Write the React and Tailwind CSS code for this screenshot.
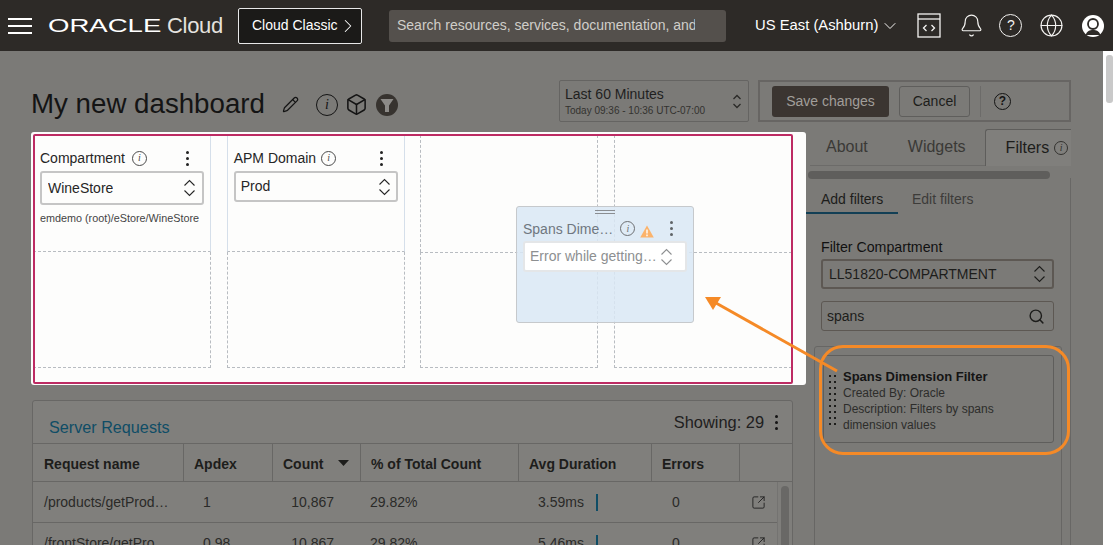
import { Bell, Box, Globe, Pencil, Search, ChevronRight, ChevronDown, SquareArrowOutUpRight } from "lucide-react";

// Small helpers for the icons that repeat
function Info({ className = "" }) {
  return (
    <span className={`inline-flex items-center justify-center rounded-full border border-current shrink-0 font-['Liberation_Serif',serif] italic leading-none ${className}`}>
      i
    </span>
  );
}

function Kebab({ className = "" }) {
  return (
    <span className={`flex flex-col gap-[3px] shrink-0 ${className}`}>
      <span className="w-[3px] h-[3px] rounded-full bg-current" />
      <span className="w-[3px] h-[3px] rounded-full bg-current" />
      <span className="w-[3px] h-[3px] rounded-full bg-current" />
    </span>
  );
}

function UpDown({ className = "" }) {
  return (
    <svg width="13" height="18" viewBox="0 0 13 18" fill="none" stroke="currentColor" strokeWidth="1.1" className={`shrink-0 ${className}`}>
      <path d="M1.500 6.500 6.500 1.500 11.500 6.500" />
      <path d="M1.500 11.500 6.500 16.500 11.500 11.500" />
    </svg>
  );
}

function Select({ text, className = "" }) {
  return (
    <div className={`flex items-center justify-between rounded-[3px] border-2 ${className}`}>
      <span className="truncate">{text}</span>
      <UpDown />
    </div>
  );
}

const columnas = "grid grid-cols-[151px_89px_88px_158px_133px_88px_52px]";

const filas = [
  { nombre: "/products/getProd…", apdex: "1", count: "10,867", pct: "29.82%", avg: "3.59ms" },
  { nombre: "/frontStore/getPro…", apdex: "0.98", count: "10,867", pct: "29.82%", avg: "5.46ms" },
];

export default function App() {
  return (
    <div className="relative w-[1113px] h-[545px] overflow-hidden flex flex-col bg-[#7b7a77] font-['Liberation_Sans',Arial,sans-serif] text-[#1d1d1b]">
      {/* BARRA SUPERIOR */}
      <header className="h-[51px] shrink-0 flex items-center bg-[#2d2a27] text-[#f4f3f1]">
        <div className="ml-[8px] w-[24px] flex flex-col gap-[5px]">
          <span className="h-[2px] bg-white" />
          <span className="h-[2px] bg-white" />
          <span className="h-[2px] bg-white" />
        </div>
        <div className="ml-[16px] w-[112px] overflow-visible">
          <span className="block origin-left scale-x-[1.45] text-[19px] leading-none font-normal text-white">ORACLE</span>
        </div>
        <span className="ml-[7px] w-[56px] text-[22px] tracking-[-0.3px] text-[#e4e2df]">Cloud</span>
        <button className="ml-[15px] w-[124px] h-[36px] flex items-center justify-start pl-[13px] bg-[#1b1a18] border-[1.5px] border-[#e8e8e8] rounded-[2px] text-[14px] text-white whitespace-nowrap">
          Cloud Classic
          <ChevronRight size={22} strokeWidth={1.1} className="ml-[-1px]" />
        </button>
        <div className="ml-[27px] w-[337px] h-[32px] shrink-0 flex items-center pl-[8px] rounded-[3px] bg-[#54504c] text-[14px] text-[#d0cec9]">
          <span className="w-[298px] overflow-hidden whitespace-nowrap">Search resources, services, documentation, and</span>
        </div>
        <span className="ml-[29px] text-[14.8px] whitespace-nowrap text-white">US East (Ashburn)</span>
        <ChevronDown size={20} strokeWidth={1.2} className="ml-[2px]" />
        <svg width="24" height="26" viewBox="0 0 24 26" fill="none" stroke="currentColor" strokeWidth="1.3" className="ml-[17px]">
          <rect x="1" y="1" width="22" height="23" />
          <path d="M1 6h22" />
          <path d="M9.500 12 6.500 15l3 3M14.500 12l3 3-3 3" />
        </svg>
        <Bell size={25} strokeWidth={1.1} className="ml-[18px]" />
        <span className="ml-[15px] w-[23px] h-[23px] rounded-full border-[1.3px] border-current flex items-center justify-center text-[14px]">?</span>
        <Globe size={25} strokeWidth={1.1} className="ml-[17px]" />
        <svg width="22" height="24" viewBox="0 0 22 24" className="ml-[18px]">
          <circle cx="11" cy="12" r="11" fill="#fff" />
          <circle cx="11" cy="10" r="5" fill="none" stroke="#2d2a27" strokeWidth="1.8" />
          <path d="M3.500 21c1.500-4 4-5 7.500-5s6 1 7.500 5" fill="#2d2a27" />
        </svg>
      </header>

      <div className="flex-1 flex min-h-0">
        <main className="w-[1103px] shrink-0 flex flex-col min-h-0">
          {/* TITULO Y ACCIONES */}
          <div className="h-[81px] shrink-0 flex items-start pl-[31px] pr-[32px]">
            <h1 className="mt-[36px] text-[27.7px] leading-[34px] whitespace-nowrap text-[#141414]">My new dashboard</h1>
            <Pencil size={17} strokeWidth={1.7} className="ml-[17px] mt-[45px] text-[#141414]" />
            <Info className="ml-[17px] mt-[43px] w-[22px] h-[22px] text-[14px] text-[#141414]" />
            <Box size={23} strokeWidth={1.6} className="ml-[7px] mt-[42px] text-[#141414]" />
            <span className="ml-[8px] mt-[43px] w-[22px] h-[22px] rounded-full bg-[#37332f] flex items-center justify-center">
              <svg width="14" height="15" viewBox="0 0 14 15">
                <path d="M0.500 1h13L9 7.500V14H5V7.500z" fill="#8d8b88" />
              </svg>
            </span>

            <div className="ml-auto mt-[29px] w-[190px] h-[42px] flex items-center justify-between pl-[5px] pr-[6px] border border-[#656462] rounded-[2px]">
              <div>
                <div className="text-[14px] leading-[18px] text-[#1f1f1f]">Last 60 Minutes</div>
                <div className="text-[10px] leading-[15px] whitespace-nowrap text-[#33322f]">Today 09:36 - 10:36 UTC-07:00</div>
              </div>
              <svg width="10" height="15" viewBox="0 0 10 15" fill="none" stroke="#2b2a28" strokeWidth="1.3">
                <path d="M1.500 5 5 1.500 8.500 5M1.500 10 5 13.500 8.500 10" />
              </svg>
            </div>

            <div className="ml-[9px] mt-[29px] w-[313px] h-[42px] flex items-center pl-[12px] border-2 border-[#676563]">
              <button className="w-[117px] h-[31px] rounded-[3px] bg-[#3b3531] text-[14px] text-[#a19e9a]">Save changes</button>
              <button className="ml-[10px] w-[71px] h-[31px] rounded-[3px] border border-[#5f5e5c] text-[14px] text-[#1d1d1b]">Cancel</button>
              <span className="ml-[10px] w-px h-[31px] bg-[#6c6b69]" />
              <span className="ml-[13px] w-[17px] h-[17px] rounded-full border-[1.5px] border-[#141414] flex items-center justify-center text-[12px] font-bold text-[#141414]">?</span>
            </div>
          </div>

          <div className="flex-1 flex min-h-0">
            {/* COLUMNA IZQUIERDA */}
            <div className="w-[806px] shrink-0 pl-[31px]">
              <section className="w-[775px] h-[253px] bg-[#fdfdfc] rounded-[3px] p-[2px]">
                <div className="relative w-[760px] h-[250px] pt-[1px] grid grid-cols-[178px_178px_178px_178px] grid-rows-[117px_116px] gap-x-[15.67px] content-start">
                  <div className="border-x border-b border-[#d5dfea] border-b-[#b8bcc1] [border-bottom-style:dashed] pl-[6px] pr-[6px] pt-[14px] text-[#262626]">
                    <div className="flex items-center text-[14px] leading-[18px]">
                      Compartment
                      <Info className="ml-[7px] w-[15px] h-[15px] text-[10px] text-[#4b4b4b]" />
                      <Kebab className="ml-auto mr-[15px] text-[#222]" />
                    </div>
                    <Select text="WineStore" className="mt-[4px] w-[164px] h-[34px] px-[6px] border-[#c5c5c5] text-[14px]" />
                    <div className="mt-[5px] text-[10.8px] whitespace-nowrap text-[#444]">emdemo (root)/eStore/WineStore</div>
                  </div>
                  <div className="border-x border-b border-[#d5dfea] border-b-[#b8bcc1] [border-bottom-style:dashed] pl-[6px] pr-[6px] pt-[14px] text-[#262626]">
                    <div className="flex items-center text-[14px] leading-[18px]">
                      APM Domain
                      <Info className="ml-[5px] w-[15px] h-[15px] text-[10px] text-[#4b4b4b]" />
                      <Kebab className="ml-auto mr-[15px] text-[#222]" />
                    </div>
                    <Select text="Prod" className="mt-[4px] w-[164px] h-[31px] px-[5px] border-[#c5c5c5] text-[14px]" />
                  </div>
                  <div className="border border-dashed border-[#b8bcc1] border-b-0" />
                  <div className="border border-dashed border-[#b8bcc1] border-b-0" />
                  <div className="border border-dashed border-[#b8bcc1] border-t-0" />
                  <div className="border border-dashed border-[#b8bcc1] border-t-0" />
                  <div className="border border-dashed border-[#b8bcc1]" />
                  <div className="border border-dashed border-[#b8bcc1]" />

                  {/* WIDGET ARRASTRADO */}
                  <div className="absolute left-[483px] top-[72px] w-[178px] h-[117px] rounded-[3px] border border-[#c6c9cc] bg-[#d9e7f4]/85 px-[6px] pt-[2px] text-[#6f7780]">
                    <div className="mx-auto mt-[1px] w-[20px] flex flex-col gap-[2px] items-center">
                      <span className="w-full h-px bg-[#8a8d91]" />
                      <span className="w-full h-px bg-[#8a8d91]" />
                    </div>
                    <div className="mt-[5px] flex items-center text-[14px] leading-[18px]">
                      <span className="whitespace-nowrap">Spans Dime…</span>
                      <Info className="ml-[7px] w-[15px] h-[15px] text-[10px] text-[#6d6f72]" />
                      <svg width="14" height="13" viewBox="0 0 14 13" className="ml-[5px] mt-[6px]">
                        <path d="M7 0.500 13.800 12.500H0.200z" fill="#fbb36c" />
                        <path d="M7 4.500v4M7 9.600v1.600" stroke="#fff" strokeWidth="1.4" />
                      </svg>
                      <Kebab className="ml-auto mr-[14px] text-[#5f6367]" />
                    </div>
                    <Select text="Error while getting…" className="mt-[3px] w-[164px] h-[31px] pl-[5px] pr-[12px] bg-white border-[#e4e6e8] text-[14px] text-[#8d8f91]" />
                  </div>

                  {/* BORDE ROSA DE LA ZONA DE FILTROS */}
                  <div className="absolute inset-0 rounded-[2px] border-2 border-[#bd2b63] pointer-events-none" />
                </div>
              </section>

              {/* TABLA SERVER REQUESTS */}
              <section className="mt-[15px] ml-[1px] w-[761px] rounded-t-[3px] border border-[#686765] bg-[#807f7c]">
                <div className="h-[42px] flex items-center pl-[16px] pr-[14px]">
                  <span className="mt-[10px] text-[16.2px] text-[#0f4d66]">Server Requests</span>
                  <span className="ml-auto text-[16.4px] text-[#202020]">Showing: 29</span>
                  <Kebab className="ml-[11px] text-[#141414]" />
                </div>
                <div className={`${columnas} h-[39px] items-center border-y border-[#686765] text-[14px] font-bold text-[#1d1d1b]`}>
                  <div className="h-full flex items-center pl-[11px] pt-[3px] border-r border-[#686765]">Request name</div>
                  <div className="h-full flex items-center pl-[10px] pt-[3px] border-r border-[#686765]">Apdex</div>
                  <div className="h-full flex items-center pl-[10px] pt-[3px] border-r border-[#686765]">
                    Count
                    <svg width="11" height="6" viewBox="0 0 11 6" className="ml-[15px] mb-[2px]"><path d="M0 0h11L5.500 6z" fill="#1d1d1b" /></svg>
                  </div>
                  <div className="h-full flex items-center pl-[10px] pt-[3px] border-r border-[#686765]">% of Total Count</div>
                  <div className="h-full flex items-center pl-[10px] pt-[3px] border-r border-[#686765]">Avg Duration</div>
                  <div className="h-full flex items-center pl-[10px] pt-[3px] border-r border-[#686765]">Errors</div>
                  <div />
                </div>
                <div className="relative">
                  {filas.map((f) => (
                    <div key={f.nombre} className={`${columnas} h-[41px] items-center border-b border-[#686765] text-[14px] text-[#2a2a28]`}>
                      <div className="pl-[11px] whitespace-nowrap">{f.nombre}</div>
                      <div className="pl-[19px]">{f.apdex}</div>
                      <div className="pr-[27px] text-right">{f.count}</div>
                      <div className="pl-[9px]">{f.pct}</div>
                      <div className="flex items-center pl-[19px]">
                        {f.avg}
                        <span className="ml-[12px] w-[2px] h-[17px] bg-[#0f4d66]" />
                      </div>
                      <div className="pl-[20px]">0</div>
                      <div className="pl-[11px]"><SquareArrowOutUpRight size={15} strokeWidth={1.5} className="text-[#222]" /></div>
                    </div>
                  ))}
                  <div className="absolute right-0 top-0 bottom-0 w-[15px] border-l border-[#747371] bg-[#7f7e7b]">
                    <div className="mx-auto mt-[4px] w-[8px] h-[80px] rounded-[4px] bg-[#696866]" />
                  </div>
                </div>
              </section>
            </div>

            {/* PANEL DERECHO */}
            <aside className="w-[265px] shrink-0 -mt-[3px] flex flex-col min-h-0">
              <div className="h-[37px] shrink-0 flex items-end border-b border-[#6c6b69] ml-[4px] text-[16px] text-[#3a3936]">
                <span className="ml-[16px] mb-[6px]">About</span>
                <span className="ml-[40px] mb-[6px]">Widgets</span>
                <div className="ml-[19px] w-[87px] h-[37px] -mb-px flex items-center pl-[20px] border-l border-t border-[#5e5d5b] bg-[#807f7c] text-[#1d1d1b] whitespace-nowrap rounded-tl-[3px]">
                  Filters
                  <Info className="ml-[5px] w-[14px] h-[14px] text-[10px] text-[#33322f]" />
                </div>
              </div>
              <div className="ml-[2px] mt-[5px] h-[8px] shrink-0 w-[242px] rounded-[4px] bg-[#5f5e5c]" />
              <div className="flex-1 border-r border-[#686765] -mt-[1px] min-h-0">
                <div className="h-[36px] flex items-start text-[14px] w-full">
                  <span className="w-[92px] h-[36px] pl-[15px] pt-[11px] border-b-[2px] border-[#123f55] text-[#1d1d1b]">Add filters</span>
                  <span className="ml-[14px] pt-[11px] text-[#3d3c3a]">Edit filters</span>
                </div>
                <div className="pl-[15px] mt-[24px] text-[14.2px] font-medium leading-[18px] text-[#111]">Filter Compartment</div>
                <Select text="LL51820-COMPARTMENT" className="ml-[15px] mt-[3px] w-[233px] h-[30px] px-[6px] border-[#5d5853] text-[14px] text-[#1d1d1b]" />
                <div className="ml-[15px] mt-[12px] w-[233px] h-[30px] flex items-center justify-between pl-[5px] pr-[8px] border border-[#5d5853] rounded-[3px] text-[14px] text-[#1d1d1b]">
                  spans
                  <Search size={17} strokeWidth={2} />
                </div>
                <div className="ml-[8px] mt-[15px] w-[248px] h-[300px] pl-[8px] pt-[8px] border border-[#676664] rounded-t-[3px]">
                  <div className="w-[231px] h-[88px] flex rounded-[3px] border border-[#5f5e5c] pt-[13px] pl-[5px]">
                    <div className="w-[7px] mt-[6px] grid grid-cols-2 gap-x-[2px] gap-y-[4px] h-[50px] content-start">
                      {Array.from({ length: 18 }).map((_, i) => (
                        <span key={i} className="w-[2px] h-[2px] bg-[#1d1d1b]" />
                      ))}
                    </div>
                    <div className="ml-[7px] text-[12px] leading-[16px] text-[#2d2d2b]">
                      <div className="text-[13px] font-bold leading-[16px] text-[#141414]">Spans Dimension Filter</div>
                      <div>Created By: Oracle</div>
                      <div>Description: Filters by spans</div>
                      <div>dimension values</div>
                    </div>
                  </div>
                </div>
              </div>
            </aside>
          </div>
        </main>

        {/* SCROLL DE LA PAGINA */}
        <div className="flex-1 bg-white pt-[4px] pl-[3px]">
          <div className="w-full h-[48px] rounded-[3px] bg-[#c9c9c9]" />
        </div>
      </div>

      {/* ANOTACION NARANJA SOBRE LA CAPTURA */}
      <div className="absolute left-[819px] top-[345px] w-[251px] h-[110px] rounded-[24px] border-[3px] border-[#f58a27]" />
      <svg width="1113" height="545" viewBox="0 0 1113 545" fill="none" className="absolute left-0 top-0 pointer-events-none">
        <path d="M837 371 716 303" stroke="#f58a27" strokeWidth="3" />
        <path d="M705 297 721 297 713 310z" fill="#f58a27" />
      </svg>
    </div>
  );
}
